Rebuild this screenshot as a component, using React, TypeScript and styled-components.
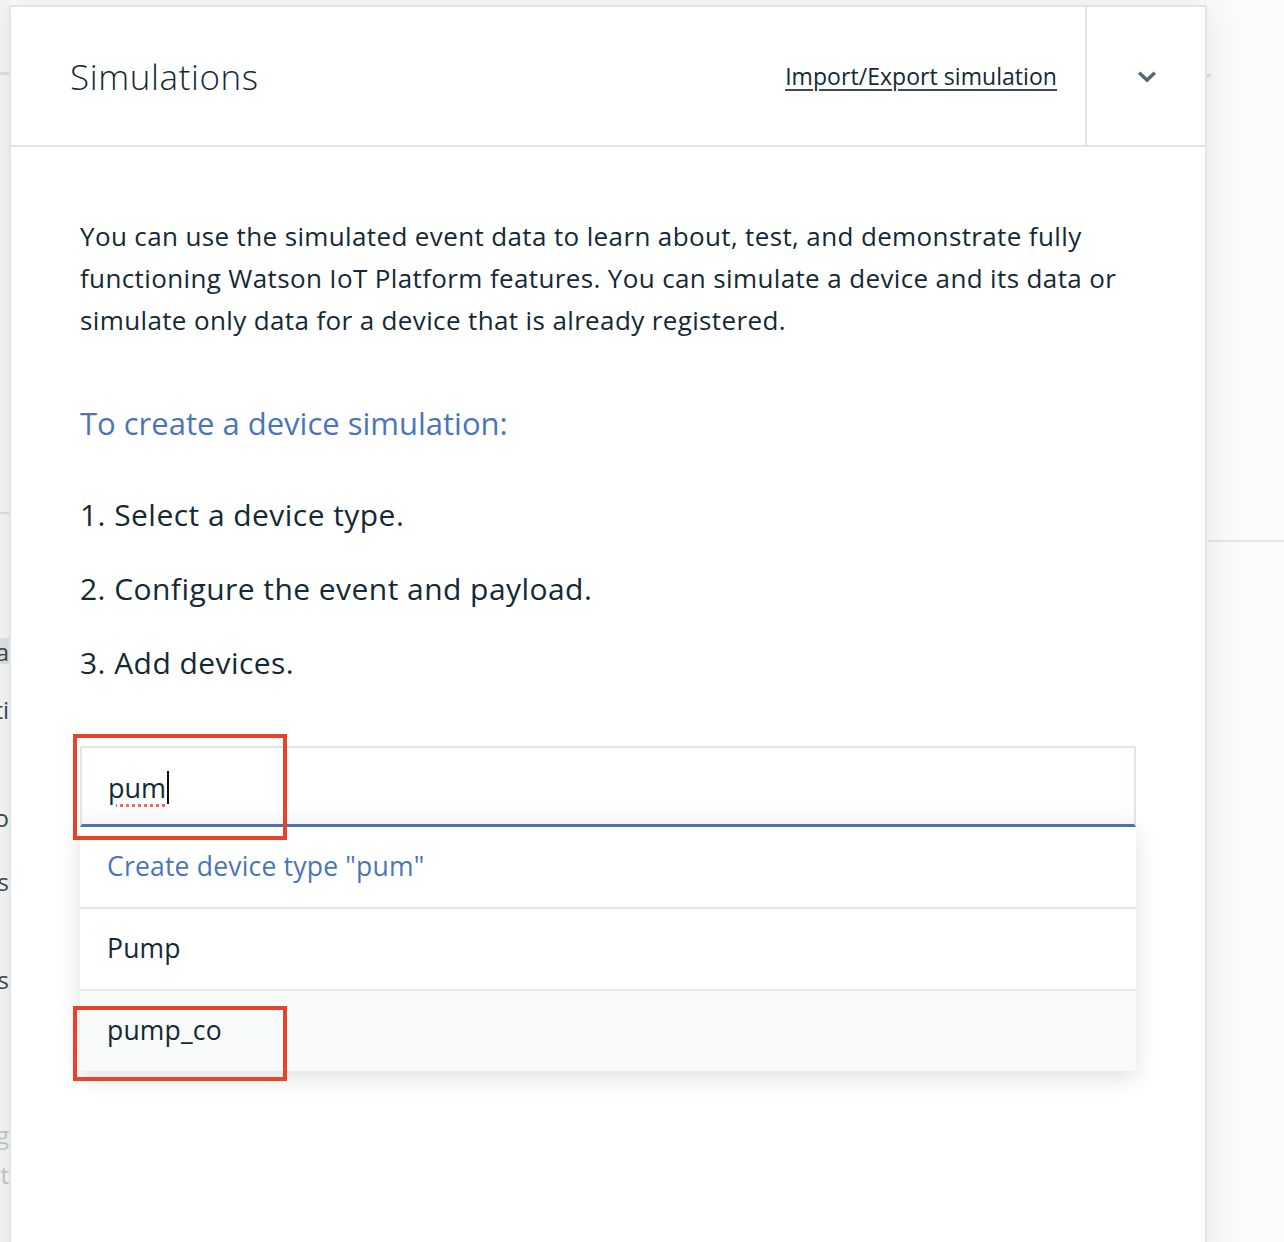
import React from 'react';
import styled, { createGlobalStyle } from 'styled-components';

const Global = createGlobalStyle`
  html, body { margin: 0; padding: 0; }
  body {
    width: 1284px;
    height: 1242px;
    overflow: hidden;
    background: #fbfbfb;
    font-family: "Open Sans", "Noto Sans", "Liberation Sans", sans-serif;
    color: #152935;
  }
`;

const Page = styled.div`
  position: relative;
  width: 1284px;
  height: 1242px;
  overflow: hidden;
  display: flex;
  background: #fbfbfb;
`;

const Sidebar = styled.nav`
  width: 9px;
  flex: none;
  overflow: hidden;
  display: flex;
  flex-direction: column;
  background: #f6f6f6;
`;

const SideRule = styled.div<{ $top: number; $thick?: number; $color?: string }>`
  margin-top: ${p => p.$top}px;
  height: ${p => p.$thick ?? 1}px;
  background: ${p => p.$color ?? '#dde3e3'};
  flex: none;
`;

const SideItem = styled.div<{ $top: number; $active?: boolean; $faint?: boolean }>`
  margin-top: ${p => p.$top}px;
  height: 26px;
  flex: none;
  display: flex;
  justify-content: flex-end;
  align-items: center;
  white-space: nowrap;
  font-size: 24px;
  color: ${p => (p.$faint ? '#c4c7ca' : '#3d4a52')};
  background: ${p => (p.$active ? '#dfe4e4' : 'transparent')};
`;

const Main = styled.main`
  flex: 1;
  display: flex;
  flex-direction: column;
`;

const MainRule = styled.div<{ $top: number; $thick?: number; $inset: number; $width?: number }>`
  margin-top: ${p => p.$top}px;
  margin-left: ${p => p.$inset}px;
  width: ${p => (p.$width ? `${p.$width}px` : 'auto')};
  height: ${p => p.$thick ?? 2}px;
  background: ${p => (p.$width ? '#dfe3e3' : '#e6e6e6')};
`;

const Panel = styled.section`
  position: absolute;
  left: 9px;
  top: 5px;
  width: 1198px;
  height: 1260px;
  box-sizing: border-box;
  border: 2px solid #dfe6e6;
  background: #ffffff;
  box-shadow: 0 0 34px rgba(0, 0, 0, 0.09);
  display: flex;
  flex-direction: column;
`;

const Header = styled.header`
  height: 138px;
  flex: none;
  display: flex;
  align-items: center;
  border-bottom: 2px solid #dfe6e6;
`;

const Title = styled.h1`
  flex: 1;
  margin: 0;
  padding-left: 59px;
  font-size: 35px;
  font-weight: 300;
  letter-spacing: 0.6px;
  color: #152935;
`;

const HeaderLink = styled.a`
  margin-right: 28px;
  font-size: 23px;
  letter-spacing: 0.05px;
  color: #152935;
  text-decoration: underline;
  text-underline-offset: 4px;
  text-decoration-thickness: 2px;
  text-decoration-color: #3d4a52;
`;

const ChevronCell = styled.button`
  align-self: stretch;
  width: 120px;
  flex: none;
  border: none;
  border-left: 2px solid #dfe6e6;
  background: transparent;
  display: flex;
  align-items: center;
  justify-content: center;
  padding: 2px 0 0 2px;
`;

const Body = styled.div`
  padding: 68px 69px 0 69px;
  display: flex;
  flex-direction: column;
`;

const Intro = styled.p`
  margin: 0;
  font-size: 26px;
  letter-spacing: 0.37px;
  line-height: 42px;
  color: #152935;
`;

const Subheading = styled.h2`
  margin: 62px 0 0 0;
  font-size: 31px;
  line-height: 40px;
  font-weight: 400;
  color: #4a76b8;
`;

const Steps = styled.ol`
  list-style: none;
  margin: 52px 0 0 0;
  padding: 0;
  display: flex;
  flex-direction: column;
  gap: 34px;
`;

const Step = styled.li`
  font-size: 30px;
  letter-spacing: 0.45px;
  line-height: 40px;
  color: #152935;
`;

const Combo = styled.div`
  position: relative;
  margin-top: 63px;
  width: 1056px;
`;

const InputBox = styled.div`
  height: 74px;
  box-sizing: content-box;
  border: 2px solid #dfe6e6;
  border-bottom: 3px solid #5077b4;
  background: linear-gradient(180deg, #ffffff 70%, #fafafa 100%);
  display: flex;
  align-items: center;
  padding-left: 26px;
  padding-top: 2px;
`;

const Typed = styled.span`
  font-size: 27px;
  color: #152935;
  text-decoration: underline dotted #ec6a63;
  text-decoration-thickness: 3px;
  text-underline-offset: 6px;
`;

const Caret = styled.span`
  display: inline-block;
  width: 2px;
  height: 33px;
  margin-left: 1px;
  background: #111;
`;

const Menu = styled.ul`
  list-style: none;
  margin: 0;
  padding: 0;
  background: #fff;
  box-shadow: 0 6px 22px rgba(0, 0, 0, 0.13);
`;

const Option = styled.li<{ $accent?: boolean; $hover?: boolean }>`
  height: 80px;
  display: flex;
  align-items: center;
  padding-left: 27px;
  padding-bottom: 2px;
  box-sizing: border-box;
  font-size: 26.5px;
  letter-spacing: 0.2px;
  color: ${p => (p.$accent ? '#4a76b8' : '#152935')};
  background: ${p => (p.$hover ? '#f9fafa' : '#ffffff')};
  & + & {
    border-top: 2px solid #e3e8e8;
    height: 82px;
  }
`;

const Annotation = styled.div<{ $top: number; $height: number }>`
  position: absolute;
  left: -7px;
  top: ${p => p.$top}px;
  width: 214px;
  height: ${p => p.$height}px;
  box-sizing: border-box;
  border: 4px solid #e8432a;
  pointer-events: none;
`;

export default function App() {
  return (
    <>
      <Global />
      <Page>
        <Sidebar>
          <SideRule $top={72} $thick={3} />
          <SideRule $top={437} $thick={2} $color="#e1e1e1" />
          <SideItem $top={124} $active>Data</SideItem>
          <SideItem $top={32}>Activiti</SideItem>
          <SideItem $top={82}>Go</SideItem>
          <SideItem $top={38}>Rules</SideItem>
          <SideItem $top={72}>Keys</SideItem>
          <SideItem $top={129} $faint>Setting</SideItem>
          <SideItem $top={14} $faint>Plat</SideItem>
        </Sidebar>
        <Main>
          <MainRule $top={74} $thick={3} $inset={1198} $width={4} />
          <MainRule $top={463} $inset={1199} />
        </Main>
        <Panel>
          <Header>
            <Title>Simulations</Title>
            <HeaderLink>Import/Export simulation</HeaderLink>
            <ChevronCell aria-label="Collapse">
              <svg width="20" height="12" viewBox="0 0 20 12">
                <path d="M3.5 3 L10 9 L16.5 3" fill="none" stroke="#5a6872" strokeWidth="3.6" strokeLinecap="square" />
              </svg>
            </ChevronCell>
          </Header>
          <Body>
            <Intro>
              You can use the simulated event data to learn about, test, and demonstrate fully functioning Watson IoT
              Platform features. You can simulate a device and its data or simulate only data for a device that is
              already registered.
            </Intro>
            <Subheading>To create a device simulation:</Subheading>
            <Steps>
              <Step>1. Select a device type.</Step>
              <Step>2. Configure the event and payload.</Step>
              <Step>3. Add devices.</Step>
            </Steps>
            <Combo>
              <InputBox>
                <Typed>pum</Typed>
                <Caret />
              </InputBox>
              <Menu>
                <Option $accent>Create device type "pum"</Option>
                <Option>Pump</Option>
                <Option $hover>pump_co</Option>
              </Menu>
              <Annotation $top={-12} $height={106} />
              <Annotation $top={260} $height={75} />
            </Combo>
          </Body>
        </Panel>
      </Page>
    </>
  );
}
